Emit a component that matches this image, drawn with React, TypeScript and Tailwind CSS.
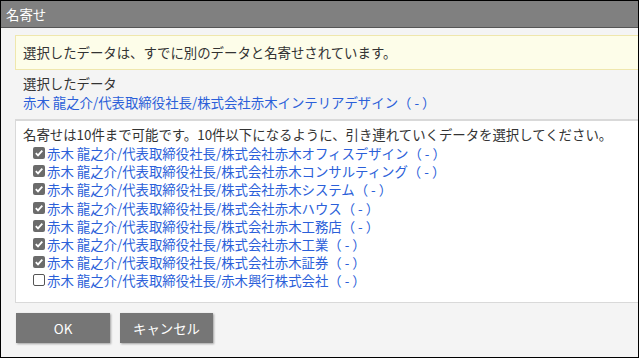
import React from "react";

const font = { fontFamily: '"Noto Sans CJK JP", "Noto Sans", sans-serif' };

const rows = [
  { label: "赤木 龍之介/代表取締役社長/株式会社赤木オフィスデザイン（ - ）", checked: true },
  { label: "赤木 龍之介/代表取締役社長/株式会社赤木コンサルティング（ - ）", checked: true },
  { label: "赤木 龍之介/代表取締役社長/株式会社赤木システム（ - ）", checked: true },
  { label: "赤木 龍之介/代表取締役社長/株式会社赤木ハウス（ - ）", checked: true },
  { label: "赤木 龍之介/代表取締役社長/株式会社赤木工務店（ - ）", checked: true },
  { label: "赤木 龍之介/代表取締役社長/株式会社赤木工業（ - ）", checked: true },
  { label: "赤木 龍之介/代表取締役社長/株式会社赤木証券（ - ）", checked: true },
  { label: "赤木 龍之介/代表取締役社長/赤木興行株式会社（ - ）", checked: false },
];

function Check(props: { checked: boolean }) {
  if (!props.checked) {
    return <span className="w-[12px] h-[12px] rounded-[2px] border border-[#555] bg-white shrink-0"></span>;
  }
  return (
    <span className="w-[12px] h-[12px] rounded-[2px] bg-[#6b6b6b] shrink-0 flex items-center justify-center">
      <svg width="10" height="10" viewBox="0 0 10 10">
        <path d="M1.8 5.2 L4 7.4 L8.3 2.6" stroke="white" strokeWidth="1.8" fill="none" />
      </svg>
    </span>
  );
}

export default function App() {
  return (
    <div className="w-[640px] h-[359px] bg-white" style={font}>
      <div className="w-[639px] h-[358px] border border-black bg-[#f4f4f4] overflow-hidden flex flex-col">
        <div className="h-[27px] shrink-0 bg-[#808080] border-b border-[#555] text-white text-[13.4px] leading-[26px] pl-[5px]">
          名寄せ
        </div>
        <div className="pl-[14px] flex flex-col text-[13.4px] text-[#333]">
          <div className="mt-[7px] h-[35px] border border-[#efe7ad] border-r-0 bg-[#fdfde9] pl-[7px] flex items-center">
            選択したデータは、すでに別のデータと名寄せされています。
          </div>
          <div className="pl-[8px] mt-[4px] leading-[19px]">
            <div>選択したデータ</div>
            <div className="text-[#2b5fd9]">赤木 龍之介/代表取締役社長/株式会社赤木インテリアデザイン（ - ）</div>
          </div>
          <div className="mt-[7px] h-[184px] bg-white border border-[#d9d9d9] border-t-2 border-r-0 pl-[7px] pt-[4px]">
            <div className="leading-[18px] mb-[1px]">
              名寄せは10件まで可能です。10件以下になるように、引き連れていくデータを選択してください。
            </div>
            {rows.map((r, i) => (
              <div key={i} className="flex items-center gap-[2px] pl-[10px] h-[18.2px]">
                <Check checked={r.checked} />
                <span className="text-[#2b5fd9] leading-[18px]">{r.label}</span>
              </div>
            ))}
          </div>
          <div className="flex gap-[10px] mt-[10px] pl-[1px]">
            <button className="w-[94px] h-[30px] bg-[#767676] text-white text-[13.4px] shadow-[1px_1px_2px_rgba(0,0,0,0.35)]">OK</button>
            <button className="w-[93px] h-[30px] bg-[#767676] text-white text-[13.4px] shadow-[1px_1px_2px_rgba(0,0,0,0.35)]">キャンセル</button>
          </div>
        </div>
      </div>
    </div>
  );
}
